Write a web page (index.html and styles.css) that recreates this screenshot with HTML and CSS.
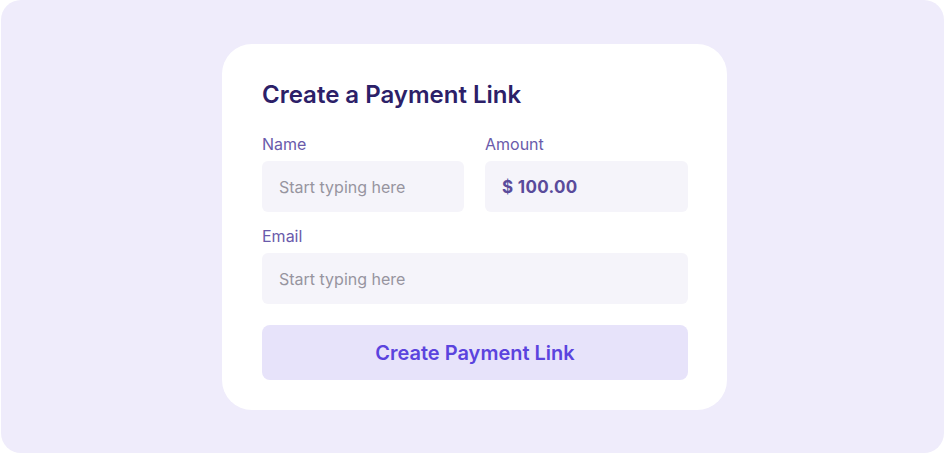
FILE: index.html
```html
<!DOCTYPE html>
<html lang="en">
<head>
<meta charset="utf-8">
<title>Create a Payment Link</title>
<link rel="stylesheet" href="styles.css">
</head>
<body>
<div class="stage">
  <div class="card">
    <h1 class="title">Create a Payment Link</h1>
    <div class="row">
      <div class="field">
        <label class="label">Name</label>
        <div class="input placeholder">Start typing here</div>
      </div>
      <div class="field">
        <label class="label">Amount</label>
        <div class="input value">$ 100.00</div>
      </div>
    </div>
    <div class="field email">
      <label class="label">Email</label>
      <div class="input placeholder">Start typing here</div>
    </div>
    <button class="btn">Create Payment Link</button>
  </div>
</div>
</body>
</html>
```
FILE: styles.css
```css
* { box-sizing: border-box; }
html, body { margin: 0; padding: 0; background: #ffffff; }
body {
  padding: 0 1px 1px 1px;
  font-family: Inter, "Noto Sans", sans-serif;
}
.stage {
  height: 453px;
  background: #efecfb;
  border-radius: 20px;
  display: flex;
  justify-content: center;
  align-items: flex-start;
  padding-top: 44px;
  padding-left: 4px;
}
.card {
  width: 505px;
  background: #ffffff;
  border-radius: 30px;
  padding: 36px 39px 30px 40px;
  display: flex;
  flex-direction: column;
}
.title {
  margin: 0;
  font-size: 24px;
  line-height: 30px;
  font-weight: 600;
  color: #2c2068;
}
.row {
  margin-top: 24px;
  display: grid;
  grid-template-columns: 202px 203px;
  column-gap: 21px;
}
.field { display: flex; flex-direction: column; }
.email { margin-top: 14px; }
.label {
  font-size: 16px;
  line-height: 20px;
  color: #6a5bab;
  margin-bottom: 7px;
}
.input {
  height: 51px;
  background: #f5f4fa;
  border-radius: 6px;
  padding-left: 17px;
  display: flex;
  align-items: center;
  font-size: 16px;
}
.placeholder { color: #97949f; }
.value { color: #5a4b9b; font-weight: 700; font-size: 17px; letter-spacing: 0.3px; }
.btn {
  margin-top: 21px;
  height: 55px;
  border: 0;
  border-radius: 8px;
  background: #e7e3fa;
  color: #5b44de;
  font-family: Inter, "Noto Sans", sans-serif;
  font-size: 20px;
  font-weight: 600;
  cursor: pointer;
}
```
